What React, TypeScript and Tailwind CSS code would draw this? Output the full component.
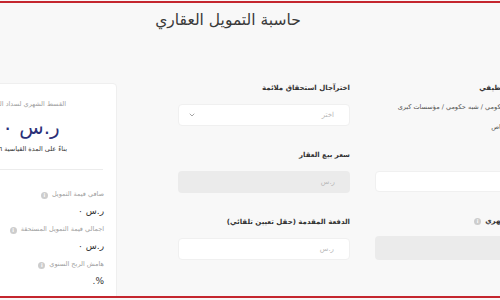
import { ChevronDown } from "lucide-react";

function InfoDot() {
  return (
    <span className="inline-flex w-[7px] h-[7px] rounded-full bg-[#cdcdcd] text-white text-[5px] leading-none items-center justify-center font-bold">
      i
    </span>
  );
}

function Field({
  label,
  placeholder,
  gray,
  select,
}: {
  label: string;
  placeholder: string;
  gray?: boolean;
  select?: boolean;
}) {
  return (
    <div className="flex flex-col">
      <label className="h-3 text-[7px] leading-3 font-semibold text-[#333]">{label}</label>
      <div
        className={`mt-[10px] h-[22px] rounded-sm flex items-center justify-between pr-[15px] pl-[9px] text-[7px] text-[#b8b8b8] ${
          gray ? "bg-[#ebebeb]" : "bg-white border border-[#f0f0f0]"
        }`}
      >
        <span>{placeholder}</span>
        {select && <ChevronDown className="w-[8px] h-[8px] text-[#777]" strokeWidth={2} />}
      </div>
    </div>
  );
}

function Stat({ label, children }: { label: string; children: React.ReactNode }) {
  return (
    <div className="flex flex-col">
      <div className="h-3 flex items-center gap-[4px] text-[6.5px] text-[#a0a0a0]">
        <span>{label}</span>
        <InfoDot />
      </div>
      <div className="mt-[3px] h-[14px] text-[9px] leading-[14px] text-[#333]">{children}</div>
    </div>
  );
}

export default function App() {
  return (
    <div className="w-[500px] h-[300px] overflow-hidden bg-[#f8f8f8] font-['DejaVu_Sans',sans-serif]">
      <div className="mt-px h-[297px] border-y-2 border-[#c4262e] overflow-hidden">
        <div dir="rtl" className="ml-[-67px] w-[604px]">
          <h1 className="pt-[5px] pr-[14px] text-center text-[15.5px] leading-6 text-[#3a3a3a]">
            حاسبة التمويل العقاري
          </h1>

          <div className="mt-[50px] flex items-start justify-between">
            {/* form */}
            <div className="w-[359px] flex gap-[25px]">
              <div className="w-[162px] flex flex-col">
                <label className="h-3 text-[7px] leading-3 font-semibold text-[#333]">القطاع الوظيفي</label>
                <div className="mt-[8px] pr-[19px] h-3 flex items-center gap-[5px] text-[6.5px] text-[#555]">
                  <span className="w-[8px] h-[8px] shrink-0 rounded-full border border-[#bbb] bg-white" />
                  <span className="whitespace-nowrap">حكومي / شبه حكومي / مؤسسات كبرى</span>
                </div>
                <div className="mt-[8px] pr-[19px] h-3 flex items-center gap-[5px] text-[6.5px] text-[#555]">
                  <span className="w-[8px] h-[8px] shrink-0 rounded-full border border-[#bbb] bg-white" />
                  <span>خاص</span>
                </div>
                <div className="mt-[37px] h-[21px] rounded-sm bg-white border border-[#f0f0f0]" />
                <label className="mt-[23px] h-3 flex items-center gap-[4px] text-[7px] leading-3 font-semibold text-[#333]">
                  <span>الراتب الشهري</span>
                  <InfoDot />
                </label>
                <div className="mt-[9px] h-[24px] rounded-sm bg-[#ebebeb]" />
              </div>

              <div className="w-[172px] flex flex-col gap-[23px]">
                <Field label="اخترآجال استحقاق ملائمة" placeholder="اختر" select />
                <Field label="سعر بيع العقار" placeholder="ر.س" gray />
                <Field label="الدفعة المقدمة (حقل تعيين تلقائي)" placeholder="ر.س" />
              </div>
            </div>

            {/* summary card */}
            <div className="mt-px w-[184px] h-[240px] bg-white border border-[#efefef] rounded-sm">
              <div className="pt-[14px] text-center">
                <div className="h-3 text-[6.5px] leading-3 text-[#a0a0a0]">القسط الشهري لسداد التمويل</div>
                <div className="mt-[5px] h-[24px] pl-[12px] text-[20px] leading-6 text-[#2b2f78]">ر.س ٠</div>
                <div className="mt-[4px] h-3 text-[6.5px] leading-3 text-[#333]">بناءً على المدة القياسية ٦ شهراً</div>
              </div>
              <div className="mt-[14px] mx-[13px] border-t border-[#ececec]" />
              <div className="pr-[12px] pt-[19px] flex flex-col gap-[6px]">
                <Stat label="صافي قيمة التمويل">ر.س ٠</Stat>
                <Stat label="اجمالي قيمة التمويل المستحقة">ر.س ٠</Stat>
                <Stat label="هامش الربح السنوي">
                  <span dir="ltr">.%</span>
                </Stat>
              </div>
            </div>
          </div>
        </div>
      </div>
    </div>
  );
}
